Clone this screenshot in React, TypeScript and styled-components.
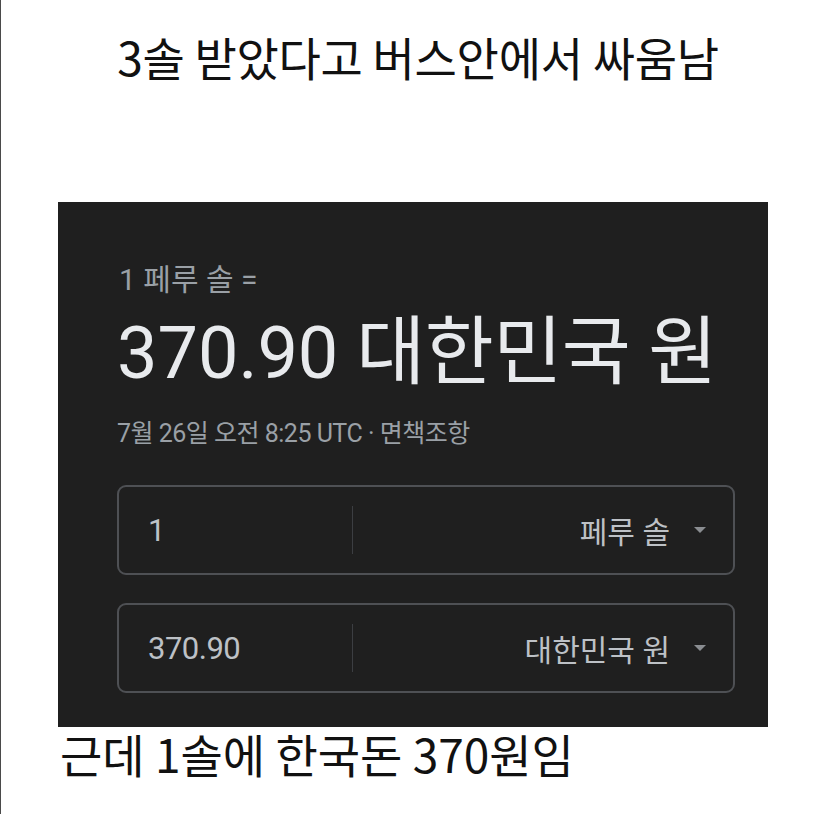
import React from 'react';
import styled, { createGlobalStyle } from 'styled-components';

const GlobalStyle = createGlobalStyle`
  html, body {
    margin: 0;
    padding: 0;
    background: #ffffff;
  }
`;

const Page = styled.div`
  width: 835px;
  height: 814px;
  box-sizing: border-box;
  border-left: 1px solid #4a4a4a;
  display: flex;
  flex-direction: column;
  font-family: 'Noto Sans CJK KR', 'Noto Sans', sans-serif;
  color: #111;
  overflow: hidden;
`;

const Title = styled.h1`
  margin: 26px 0 0;
  font-size: 46px;
  font-weight: 400;
  line-height: 60px;
  text-align: center;
  letter-spacing: -0.3px;
  height: 60px;
`;

const Panel = styled.div`
  margin: 116px 0 0 57px;
  width: 710px;
  height: 525px;
  box-sizing: border-box;
  background: #1f1f1f;
  padding: 60px 33px 0 59px;
  font-family: Roboto, 'Noto Sans CJK KR', sans-serif;
  display: flex;
  flex-direction: column;
`;

const Label = styled.div`
  color: #9aa0a6;
  font-size: 30px;
  line-height: 36px;
  padding-left: 2px;
`;

const Amount = styled.div`
  color: #e8eaed;
  font-size: 72px;
  line-height: 84px;
  margin-top: 12px;
  white-space: nowrap;
`;

const AmountUnit = styled.span`
  font-size: 75px;
  letter-spacing: -0.5px;
`;

const Stamp = styled.div`
  color: #9aa0a6;
  font-size: 25px;
  line-height: 30px;
  margin-top: 23px;
  letter-spacing: -0.5px;
`;

const Boxes = styled.div`
  display: flex;
  flex-direction: column;
  gap: 28px;
  margin-top: 36px;
`;

const Field = styled.div`
  height: 90px;
  box-sizing: border-box;
  border: 2px solid #4e5054;
  border-radius: 9px;
  display: flex;
  align-items: center;
  color: #bdc1c6;
`;

const Value = styled.div`
  width: 204px;
  padding-left: 29px;
  font-size: 31px;
  letter-spacing: -0.5px;
`;

const Divider = styled.div`
  width: 1px;
  height: 48px;
  background: #3c3e42;
`;

const Currency = styled.div`
  flex: 1;
  display: flex;
  justify-content: flex-end;
  align-items: center;
  gap: 24px;
  padding-right: 27px;
  font-size: 30px;
`;

const Caret = styled.span`
  width: 0;
  height: 0;
  border-left: 6px solid transparent;
  border-right: 6px solid transparent;
  border-top: 6px solid #8a8d91;
`;

const Caption = styled.div`
  margin: -4px 0 0 59px;
  font-size: 46px;
  line-height: 60px;
  letter-spacing: 0;
`;

const rows = [
  { value: '1', currency: '페루 솔' },
  { value: '370.90', currency: '대한민국 원' },
];

export default function App() {
  return (
    <>
      <GlobalStyle />
      <Page>
        <Title>3솔 받았다고 버스안에서 싸움남</Title>
        <Panel>
          <Label>1 페루 솔 =</Label>
          <Amount>
            370.90 <AmountUnit>대한민국 원</AmountUnit>
          </Amount>
          <Stamp>7월 26일 오전 8:25 UTC · 면책조항</Stamp>
          <Boxes>
            {rows.map((r) => (
              <Field key={r.value}>
                <Value>{r.value}</Value>
                <Divider />
                <Currency>
                  {r.currency}
                  <Caret />
                </Currency>
              </Field>
            ))}
          </Boxes>
        </Panel>
        <Caption>근데 1솔에 한국돈 370원임</Caption>
      </Page>
    </>
  );
}
